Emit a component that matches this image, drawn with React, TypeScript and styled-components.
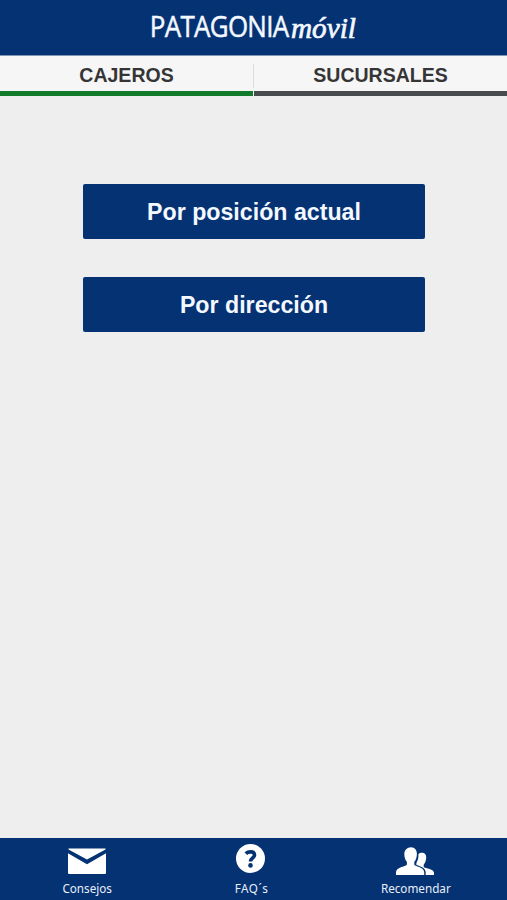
import React from "react";
import styled, { createGlobalStyle } from "styled-components";

const GlobalStyle = createGlobalStyle`
  * { box-sizing: border-box; }
  html, body { margin: 0; padding: 0; background: #eeeeee; }
`;

const Screen = styled.div`
  display: flex;
  flex-direction: column;
  width: 100%;
  height: 900px;
  background: #eeeeee;
  font-family: "Liberation Sans", Arial, sans-serif;
`;

const Header = styled.header`
  display: flex;
  justify-content: center;
  height: 56px;
  background: #053273;
  border-bottom: 1px solid #8295b5;
`;

const Tabs = styled.nav`
  display: grid;
  grid-template-columns: 253px 1px 1fr;
  height: 40px;
  background: #f6f6f7;
`;

const Tab = styled.button<{ $active?: boolean }>`
  border: 0;
  padding: 4px 0 0;
  background: transparent;
  border-bottom: 5px solid ${(p) => (p.$active ? "#127a2b" : "#474b4e")};
  color: #353536;
  font: bold 19.5px/31px "Liberation Sans", Arial, sans-serif;
`;

const Divider = styled.div`
  margin-top: 8px;
  width: 1px;
  height: 24px;
  background: #dcdcdd;
`;

const Content = styled.main`
  flex: 1;
  display: flex;
  flex-direction: column;
  align-items: center;
  gap: 38px;
  padding: 88px 0 0 1px;
`;

const ActionButton = styled.button`
  width: 342px;
  height: 55px;
  padding: 0;
  border: 0;
  border-radius: 2px;
  background: #053273;
  color: #f4f8ff;
  font: bold 23.2px/54px "Liberation Sans", Arial, sans-serif;
`;

const Footer = styled.footer`
  display: grid;
  grid-template-columns: repeat(3, 1fr);
  height: 62px;
  padding: 0 9px 0 5px;
  background: #053273;
`;

const FooterItem = styled.a<{ $spacing?: string }>`
  display: flex;
  flex-direction: column;
  align-items: center;
  padding-top: 4px;
  color: #e9effa;
  font: 11.7px/17px "Noto Sans", sans-serif;
  letter-spacing: ${(p) => p.$spacing ?? "normal"};
`;

const Icon = styled.svg`
  display: block;
  width: 40px;
  height: 38px;
  margin-right: 1px;
  flex: none;
`;

const Wordmark = () => (
  <svg width="210" height="55" viewBox="149 0 210 55" fill="#f4f8ff" stroke="#f4f8ff">
    <text
      transform="translate(149.800 37) scale(.865 1)"
      fontFamily="Open Sans, sans-serif"
      fontSize="30"
      letterSpacing="-.8"
      strokeWidth=".5"
    >
      PATAGONIA
    </text>
    <text
      transform="translate(291 37.500) scale(.975 1)"
      fontFamily="Liberation Serif, serif"
      fontStyle="italic"
      fontSize="30"
      strokeWidth=".7"
    >
      móvil
    </text>
  </svg>
);

const Mail = () => (
  <Icon viewBox="0 0 40 38" fill="#fff">
    <path d="M1.500 6.500H38.500V7.500L20 17.500 1.500 7.500Z" />
    <path d="M1 11.200 20 22.200 39 11.200V31a1 1 0 0 1-1 1H2a1 1 0 0 1-1-1Z" />
  </Icon>
);

const Help = () => (
  <Icon viewBox="0 0 40 38">
    <circle cx="19.500" cy="16.400" r="14.500" fill="#fff" />
    <path
      d="M14.800 11.600C17.300 9.200 23.500 8.900 23.500 12.900 23.500 16 19.500 15.800 19.500 19.600"
      fill="none"
      stroke="#053273"
      strokeWidth="3.700"
    />
    <circle cx="19.500" cy="23.400" r="2.300" fill="#053273" />
  </Icon>
);

const People = () => (
  <Icon viewBox="0 0 40 38" fill="#fff">
    <path d="M16 5.200c3.900 0 6 3 5.900 6.800-.1 3.500-1 6.200-2.600 7.800v2.700c0 2 9.900 2.200 9.900 8V33H1v-2.500c0-5.800 10.900-6 10.900-8v-2.700c-1.600-1.600-2.500-4.300-2.600-7.800-.1-3.800 2.800-6.800 6.700-6.800Z" />
    <path d="M23.400 12.300c1.800-2 5.900-2 7.200.5 1.500 3-.1 7.800-1.900 9.900v2.300c0 1.200 10.300 1.800 10.300 5.800V33h-8.300v-2.500c0-4.200-4.200-6.100-9.300-7.600v-2.200c1.400-2 2.300-5 2-8.400Z" />
  </Icon>
);

export default function App() {
  return (
    <Screen>
      <GlobalStyle />
      <Header><Wordmark /></Header>
      <Tabs>
        <Tab $active>CAJEROS</Tab>
        <Divider />
        <Tab>SUCURSALES</Tab>
      </Tabs>
      <Content>
        <ActionButton>Por posición actual</ActionButton>
        <ActionButton>Por dirección</ActionButton>
      </Content>
      <Footer>
        <FooterItem><Mail />Consejos</FooterItem>
        <FooterItem $spacing="0.5px"><Help />FAQ´s</FooterItem>
        <FooterItem><People />Recomendar</FooterItem>
      </Footer>
    </Screen>
  );
}
